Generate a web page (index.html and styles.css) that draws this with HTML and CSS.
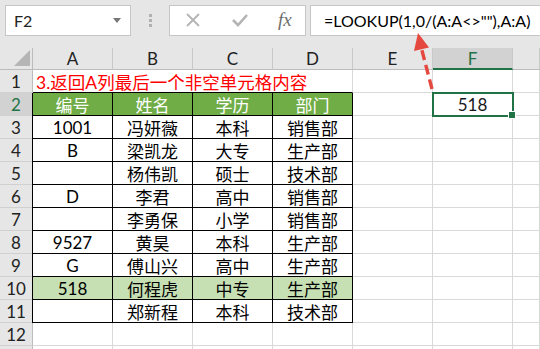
FILE: index.html
```html
<!DOCTYPE html>
<html lang="zh-CN">

<head>
    <meta charset="UTF-8">
    <meta name="viewport" content="width=device-width, initial-scale=1.0">
    <title>LOOKUP</title>
    <link rel="stylesheet" href="styles.css">
</head>

<body>
    <div class="toolbar">
        <div class="name-box">
            <span>F2</span>
            <span class="drop"></span>
        </div>
        <div class="grip"><i></i><i></i><i></i></div>
        <div class="fx-box">
            <svg width="16" height="16" viewBox="0 0 16 16"><path d="M2 2L14 14M14 2L2 14" stroke="#b4b4b4" stroke-width="1.8" fill="none"/></svg>
            <svg width="18" height="16" viewBox="0 0 18 16"><path d="M2 8L7 13L16 3" stroke="#b4b4b4" stroke-width="2.6" fill="none"/></svg>
            <span class="fx">fx</span>
        </div>
        <div class="formula">=LOOKUP(1,0/(A:A&lt;&gt;""),A:A)</div>
    </div>

    <div class="sheet">
        <!-- column headers -->
        <div class="corner"><span class="tri"></span></div>
        <div class="ch">A</div>
        <div class="ch">B</div>
        <div class="ch">C</div>
        <div class="ch">D</div>
        <div class="ch">E</div>
        <div class="ch sel">F</div>
        <div class="ch"></div>

        <div class="rh">1</div>
        <div class="c title">3.返回A列最后一个非空单元格内容</div>
        <div class="c"></div><div class="c"></div><div class="c"></div>

        <div class="rh sel">2</div>
        <div class="c t first head">编号</div>
        <div class="c t head">姓名</div>
        <div class="c t head">学历</div>
        <div class="c t head">部门</div>
        <div class="c"></div><div class="c active">518</div><div class="c"></div>

        <div class="rh">3</div>
        <div class="c t first">1001</div><div class="c t">冯妍薇</div><div class="c t">本科</div><div class="c t">销售部</div>
        <div class="c"></div><div class="c"></div><div class="c"></div>

        <div class="rh">4</div>
        <div class="c t first">B</div><div class="c t">梁凯龙</div><div class="c t">大专</div><div class="c t">生产部</div>
        <div class="c"></div><div class="c"></div><div class="c"></div>

        <div class="rh">5</div>
        <div class="c t first"></div><div class="c t">杨伟凯</div><div class="c t">硕士</div><div class="c t">技术部</div>
        <div class="c"></div><div class="c"></div><div class="c"></div>

        <div class="rh">6</div>
        <div class="c t first">D</div><div class="c t">李君</div><div class="c t">高中</div><div class="c t">销售部</div>
        <div class="c"></div><div class="c"></div><div class="c"></div>

        <div class="rh">7</div>
        <div class="c t first"></div><div class="c t">李勇保</div><div class="c t">小学</div><div class="c t">销售部</div>
        <div class="c"></div><div class="c"></div><div class="c"></div>

        <div class="rh">8</div>
        <div class="c t first">9527</div><div class="c t">黄昊</div><div class="c t">本科</div><div class="c t">生产部</div>
        <div class="c"></div><div class="c"></div><div class="c"></div>

        <div class="rh">9</div>
        <div class="c t first">G</div><div class="c t">傅山兴</div><div class="c t">高中</div><div class="c t">生产部</div>
        <div class="c"></div><div class="c"></div><div class="c"></div>

        <div class="rh">10</div>
        <div class="c t first hl">518</div><div class="c t hl">何程虎</div><div class="c t hl">中专</div><div class="c t hl">生产部</div>
        <div class="c"></div><div class="c"></div><div class="c"></div>

        <div class="rh">11</div>
        <div class="c t first"></div><div class="c t">郑新程</div><div class="c t">本科</div><div class="c t">技术部</div>
        <div class="c"></div><div class="c"></div><div class="c"></div>

        <div class="rh">12</div>
        <div class="c"></div><div class="c"></div><div class="c"></div><div class="c"></div>
        <div class="c"></div><div class="c"></div><div class="c"></div>

        <div class="rh"></div>
        <div class="c"></div><div class="c"></div><div class="c"></div><div class="c"></div>
        <div class="c"></div><div class="c"></div><div class="c"></div>
    </div>

    <!-- mũi tên chỉ vào công thức -->
    <svg class="arrow" width="540" height="349" viewBox="0 0 540 349">
        <path d="M432 89L421.6 49" stroke="#e5483e" stroke-width="3.4" stroke-dasharray="10 5" fill="none"/>
        <path d="M418 33L429 47.5L414 51Z" fill="#e5483e"/>
    </svg>
</body>

</html>
```

FILE: styles.css
```css
body {
    margin: 0;
    width: 540px;
    height: 349px;
    overflow: hidden;
    background: #e6e6e6;
    font-family: Lato, "Noto Sans CJK SC", sans-serif;
    color: #000;
}

/* thanh công thức */
.toolbar {
    display: flex;
    align-items: center;
    height: 48px;
    padding: 0 0 8px 5px;
    box-sizing: border-box;
}

.name-box {
    width: 126px;
    height: 31px;
    box-sizing: border-box;
    background: #fff;
    border: 1px solid #c6c6c6;
    display: flex;
    align-items: center;
    justify-content: space-between;
    padding: 0 9px 0 8px;
    font-size: 16px;
    color: #222;
}

.drop {
    width: 0;
    height: 0;
    border-left: 4px solid transparent;
    border-right: 4px solid transparent;
    border-top: 5px solid #777;
}

.grip {
    width: 38px;
    display: flex;
    flex-direction: column;
    align-items: center;
    gap: 2px;
}

.grip i {
    width: 3px;
    height: 3px;
    background: #b0b0b0;
}

.fx-box {
    width: 137px;
    height: 31px;
    box-sizing: border-box;
    background: #fff;
    border: 1px solid #c6c6c6;
    display: flex;
    align-items: center;
    padding-left: 15px;
    gap: 30px;
}

.fx {
    font-family: "Liberation Serif", serif;
    font-style: italic;
    font-size: 19px;
    color: #6e6e6e;
    margin-left: -1px;
}

.formula {
    flex: 1;
    height: 31px;
    margin-left: 4px;
    box-sizing: border-box;
    background: #fff;
    border: 1px solid #c6c6c6;
    border-right: none;
    padding-left: 13px;
    font-size: 16px;
    line-height: 29px;
    white-space: nowrap;
}

/* bảng tính */
.sheet {
    display: grid;
    grid-template-columns: 33px repeat(6, 80px) 1fr;
    grid-template-rows: 22px;
    grid-auto-rows: 23px;
    background: #fff;
}

.sheet > div {
    box-sizing: border-box;
    display: flex;
    align-items: center;
    justify-content: center;
    font-size: 17px;
    white-space: nowrap;
}

.corner {
    background: #e6e6e6;
    border-right: 1px solid #bcbcbc;
    border-bottom: 1px solid #bcbcbc;
    position: relative;
}

.tri {
    position: absolute;
    right: 2px;
    bottom: 3px;
    width: 0;
    height: 0;
    border-left: 16px solid transparent;
    border-bottom: 16px solid #b5b5b5;
}

.ch {
    background: #e6e6e6;
    border-right: 1px solid #c8c8c8;
    border-bottom: 1px solid #bcbcbc;
    color: #222;
}

.ch.sel {
    background: #d2d2d2;
    color: #217346;
    border-bottom: 2px solid #217346;
}

.rh {
    background: #e6e6e6;
    border-right: 1px solid #bcbcbc;
    border-bottom: 1px solid #d0d0d0;
    color: #222;
}

.rh.sel {
    background: #d2d2d2;
    color: #217346;
}

.c {
    border-right: 1px solid #d9d9d9;
    border-bottom: 1px solid #d9d9d9;
}

.title {
    grid-column: span 4;
    justify-content: flex-start !important;
    padding-left: 3px;
    color: #ff0000;
    font-size: 17.5px !important;
    border-bottom: 1px solid #000 !important;
}

.t {
    border-right: 1px solid #000;
    border-bottom: 1px solid #000;
}

.first {
    box-shadow: -1px 0 0 #000;
}

.head {
    background: #70ad47;
    color: #fff;
}

.hl {
    background: #c6e0b4;
}

.active {
    position: relative;
    outline: 2px solid #217346;
    outline-offset: -1px;
    color: #1a1a1a;
}

.active::after {
    content: "";
    position: absolute;
    right: -4px;
    bottom: -4px;
    width: 6px;
    height: 6px;
    background: #217346;
    border: 1px solid #fff;
}

.arrow {
    position: absolute;
    left: 0;
    top: 0;
    pointer-events: none;
}
```
